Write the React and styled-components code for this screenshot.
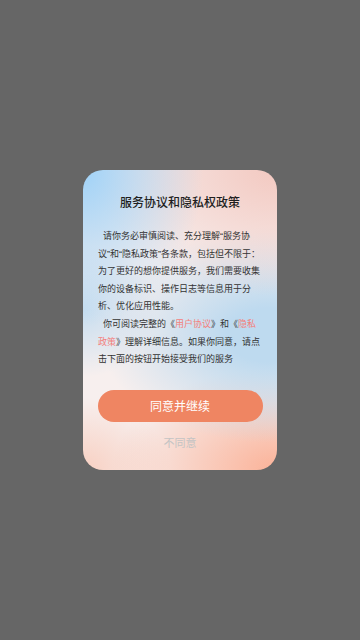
import React from "react";
import styled, { createGlobalStyle } from "styled-components";

const GlobalStyle = createGlobalStyle`
  html, body {
    margin: 0;
    padding: 0;
    height: 100%;
    background: #666666;
  }

  #root {
    height: 100%;
  }
`;

const Overlay = styled.div`
  display: flex;
  align-items: center;
  justify-content: center;
  width: 100%;
  height: 100%;
  font-family: "Noto Sans CJK SC", "Noto Sans", sans-serif;
`;

const Dialog = styled.div`
  box-sizing: border-box;
  display: flex;
  flex-direction: column;
  align-items: center;
  width: 194px;
  height: 300px;
  padding: 24px 15px 20px;
  border-radius: 20px;
  overflow: hidden;
  background:
    radial-gradient(ellipse 62% 52% at 0% 0%, rgba(160, 210, 247, 1), rgba(160, 210, 247, 0) 100%),
    radial-gradient(ellipse 38% 22% at 0% 47%, rgba(184, 216, 240, 0.75), rgba(184, 216, 240, 0) 100%),
    radial-gradient(ellipse 95% 42% at 100% 0%, rgba(243, 201, 193, 1), rgba(243, 201, 193, 0) 100%),
    radial-gradient(ellipse 88% 36% at 96% 55%, rgba(190, 218, 239, 1) 25%, rgba(190, 218, 239, 0) 100%),
    radial-gradient(ellipse 85% 34% at 100% 100%, rgba(251, 178, 152, 1), rgba(251, 178, 152, 0) 100%),
    radial-gradient(ellipse 45% 24% at 0% 100%, rgba(248, 208, 194, 1), rgba(248, 208, 194, 0) 100%),
    #f7efee;
`;

const Title = styled.h2`
  margin: 0;
  font-size: 12px;
  line-height: 16px;
  font-weight: 500;
  color: #1f1f1f;
`;

const Body = styled.div`
  align-self: stretch;
  margin-top: 18px;
  font-family: "Liberation Sans", "Noto Sans CJK SC", sans-serif;
  font-size: 9px;
  line-height: 17.6px;
  color: #333333;
`;

const Line = styled.div`
  white-space: nowrap;
  padding-left: ${(p) => (p.$indent ? "5px" : "0")};
`;

const Link = styled.span`
  color: #f4807c;
`;

const AgreeButton = styled.button`
  flex: none;
  width: 165px;
  height: 32px;
  margin-top: 21px;
  border: none;
  border-radius: 16px;
  background: #ef8562;
  color: #ffffff;
  font-family: inherit;
  font-size: 12px;
  cursor: pointer;
`;

const DeclineButton = styled.button`
  margin-top: 12px;
  padding: 0;
  border: none;
  background: none;
  color: #c4c4c4;
  font-family: inherit;
  font-size: 11px;
  line-height: 16px;
  cursor: pointer;
`;

export default function App() {
  return (
    <>
      <GlobalStyle />
      <Overlay>
        <Dialog>
          <Title>服务协议和隐私权政策</Title>
          <Body>
            <Line $indent>请你务必审慎阅读、充分理解“服务协</Line>
            <Line>议”和“隐私政策”各条款，包括但不限于：</Line>
            <Line>为了更好的想你提供服务，我们需要收集</Line>
            <Line>你的设备标识、操作日志等信息用于分</Line>
            <Line>析、优化应用性能。</Line>
            <Line $indent>
              你可阅读完整的《<Link>用户协议</Link>》和《<Link>隐私</Link>
            </Line>
            <Line>
              <Link>政策</Link>》理解详细信息。如果你同意，请点
            </Line>
            <Line>击下面的按钮开始接受我们的服务</Line>
          </Body>
          <AgreeButton>同意并继续</AgreeButton>
          <DeclineButton>不同意</DeclineButton>
        </Dialog>
      </Overlay>
    </>
  );
}
